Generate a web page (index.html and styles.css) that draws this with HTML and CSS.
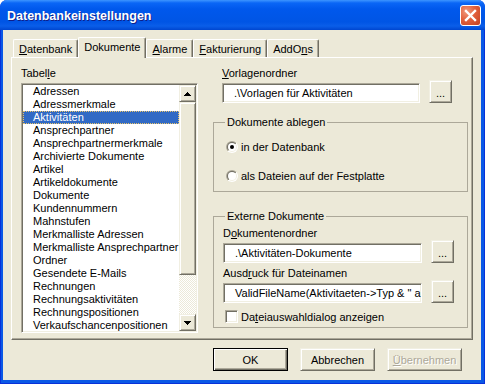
FILE: index.html
```html
<!DOCTYPE html>
<html>
<head>
    <title>Datenbankeinstellungen</title>
    <link rel="stylesheet" href="styles.css">
</head>
<body>
    <div class="fenster">
        <div class="titelleiste">
            <span class="titel">Datenbankeinstellungen</span>
            <span class="schliessen">
                <svg width="13" height="13" viewBox="0 0 13 13"><path d="M2 2L11 11M11 2L2 11" stroke="#fff" stroke-width="2.4" stroke-linecap="square"/></svg>
            </span>
        </div>
        <div class="inhalt">
            <div class="reiter">
                <span class="reiter-eintrag"><u>D</u>atenbank</span>
                <span class="reiter-eintrag aktiv">Dokumente</span>
                <span class="reiter-eintrag"><u>A</u>larme</span>
                <span class="reiter-eintrag"><u>F</u>akturierung</span>
                <span class="reiter-eintrag">AddO<u>n</u>s</span>
            </div>
            <div class="seite">
                <div class="spalte-links">
                    <div class="beschriftung">Tabel<u>l</u>e</div>
                    <div class="liste">
                        <ul class="eintraege">
                            <li>Adressen</li>
                            <li>Adressmerkmale</li>
                            <li class="gewaehlt">Aktivitäten</li>
                            <li>Ansprechpartner</li>
                            <li>Ansprechpartnermerkmale</li>
                            <li>Archivierte Dokumente</li>
                            <li>Artikel</li>
                            <li>Artikeldokumente</li>
                            <li>Dokumente</li>
                            <li>Kundennummern</li>
                            <li>Mahnstufen</li>
                            <li>Merkmalliste Adressen</li>
                            <li>Merkmalliste Ansprechpartner</li>
                            <li>Ordner</li>
                            <li>Gesendete E-Mails</li>
                            <li>Rechnungen</li>
                            <li>Rechnungsaktivitäten</li>
                            <li>Rechnungspositionen</li>
                            <li>Verkaufschancenpositionen</li>
                        </ul>
                        <div class="rollbalken">
                            <div class="rb-knopf">
                                <svg width="7" height="4" viewBox="0 0 7 4"><path d="M3 0h1v1h1v1h1v1h1v1H0V3h1V2h1V1h1z"/></svg>
                            </div>
                            <div class="rb-schieber"></div>
                            <div class="rb-bahn"></div>
                            <div class="rb-knopf">
                                <svg width="7" height="4" viewBox="0 0 7 4"><path d="M0 0h7v1H6v1H5v1H4v1H3V3H2V2H1V1H0z"/></svg>
                            </div>
                        </div>
                    </div>
                </div>
                <div class="spalte-rechts">
                    <div class="feld">
                        <div class="beschriftung"><u>V</u>orlagenordner</div>
                        <div class="feld-zeile">
                            <div class="textfeld breit">.\Vorlagen für Aktivitäten</div>
                            <button class="knopf klein">...</button>
                        </div>
                    </div>
                    <fieldset class="gruppe ablegen">
                        <legend>Dokumente ablegen</legend>
                        <label class="option erste">
                            <svg width="12" height="12" viewBox="0 0 12 12">
                                <defs>
                                    <linearGradient id="rand-aussen" x1="0" y1="0" x2="1" y2="1"><stop offset="0.5" stop-color="#aca899"/><stop offset="0.5" stop-color="#fff"/></linearGradient>
                                    <linearGradient id="rand-innen" x1="0" y1="0" x2="1" y2="1"><stop offset="0.5" stop-color="#716f64"/><stop offset="0.5" stop-color="#f1efe2"/></linearGradient>
                                </defs>
                                <circle cx="6" cy="6" r="6" fill="url(#rand-aussen)"/>
                                <circle cx="6" cy="6" r="5" fill="url(#rand-innen)"/>
                                <circle cx="6" cy="6" r="4" fill="#fff"/>
                                <circle cx="6" cy="6" r="2" fill="#000"/>
                            </svg>
                            <span>in der Datenbank</span>
                        </label>
                        <label class="option">
                            <svg width="12" height="12" viewBox="0 0 12 12">
                                <circle cx="6" cy="6" r="6" fill="url(#rand-aussen)"/>
                                <circle cx="6" cy="6" r="5" fill="url(#rand-innen)"/>
                                <circle cx="6" cy="6" r="4" fill="#fff"/>
                            </svg>
                            <span>als Dateien auf der Festplatte</span>
                        </label>
                    </fieldset>
                    <fieldset class="gruppe extern">
                        <legend>Externe Dokumente</legend>
                        <div class="beschriftung oben">D<u>o</u>kumentenordner</div>
                        <div class="feld-zeile">
                            <div class="textfeld">.\Aktivitäten-Dokumente</div>
                            <button class="knopf klein">...</button>
                        </div>
                        <div class="beschriftung oben">Ausd<u>r</u>uck für Dateinamen</div>
                        <div class="feld-zeile">
                            <div class="textfeld">ValidFileName(Aktivitaeten-&gt;Typ &amp; " a</div>
                            <button class="knopf klein">...</button>
                        </div>
                        <label class="kontrolle">
                            <span class="kaestchen"></span>
                            <span>Da<u>t</u>eiauswahldialog anzeigen</span>
                        </label>
                    </fieldset>
                </div>
            </div>
            <div class="aktionen">
                <button class="knopf standard">OK</button>
                <button class="knopf">Abbrechen</button>
                <button class="knopf inaktiv"><u>Ü</u>bernehmen</button>
            </div>
        </div>
    </div>
</body>
</html>
```
FILE: styles.css
```css
body {
    margin: 0;
    font-family: 'Liberation Sans', Arial, sans-serif;
    font-size: 11px;
    color: #000;
    background-color: #fff;
}
.fenster {
    width: 485px;
    height: 384px;
    box-sizing: border-box;
    display: flex;
    flex-direction: column;
    background-color: #0a58e6; /* Luna Rahmen */
    border: 1px solid #0831d9;
    border-top: none;
    border-radius: 7px 7px 0 0;
}
.titelleiste {
    height: 30px;
    margin: 0 -1px;
    display: flex;
    align-items: center;
    padding: 0 4px 0 7px;
    border-radius: 7px 7px 0 0;
    background: linear-gradient(180deg, #3d95ff 0, #0a66f6 3px, #0058ec 9px, #0055e5 22px, #0a5ee9 26px, #0046d0 30px);
}
.titel {
    flex: 1;
    color: #fff;
    font-weight: bold;
    font-size: 12.5px;
    text-shadow: 1px 1px 0 #0f1e88;
    padding-top: 1px;
}
.schliessen {
    width: 21px;
    height: 21px;
    box-sizing: border-box;
    display: flex;
    align-items: center;
    justify-content: center;
    border: 1px solid #fff;
    border-radius: 3px;
    background: radial-gradient(circle at 30% 30%, #f09a7e 0, #e2613d 45%, #c4401f 100%);
    margin-top: 1px;
}
.inhalt {
    flex: 1;
    margin: 0 3px 3px 2px;
    background-color: #ece9d8;
    padding: 7px 0 0 8px;
    display: flex;
    flex-direction: column;
}
.reiter {
    display: flex;
    align-items: flex-end;
    height: 20px;
    margin-left: 2px;
}
.reiter-eintrag {
    position: relative;
    height: 18px;
    box-sizing: border-box;
    padding: 0 5px;
    display: flex;
    align-items: center;
    border-top: 1px solid #fff;
    border-left: 1px solid #fff;
    border-right: 1px solid #716f64;
    box-shadow: inset -1px 0 #aca899;
    border-radius: 2px 2px 0 0;
}
.reiter-eintrag.aktiv {
    height: 21px;
    margin-bottom: -1px;
    padding-bottom: 2px;
    background-color: #ece9d8;
    z-index: 1;
}
.seite {
    width: 462px;
    height: 283px;
    box-sizing: border-box;
    border: 1px solid;
    border-color: #fff #716f64 #716f64 #fff;
    box-shadow: inset -1px -1px #aca899;
    padding: 9px 0 0 9px;
    display: flex;
}
.spalte-links {
    width: 177px;
}
.beschriftung {
    line-height: 13px;
    height: 13px;
}
.liste {
    margin-top: 3px;
    height: 250px;
    box-sizing: border-box;
    border: 1px solid;
    border-color: #aca899 #fff #fff #aca899;
    box-shadow: inset 1px 1px #716f64, inset -1px -1px #f1efe2;
    padding: 1px;
    display: flex;
    background-color: #fff;
    overflow: hidden;
}
.eintraege {
    flex: 1;
    list-style: none;
    margin: 0;
    padding: 0;
    overflow: hidden;
}
.eintraege li {
    height: 13px;
    line-height: 13px;
    padding-left: 10px;
    white-space: nowrap;
}
.eintraege li.gewaehlt {
    background-color: #316ac5;
    color: #fff;
    outline: 1px dotted #e8c36a;
    outline-offset: -1px;
}
.rollbalken {
    width: 17px;
    display: flex;
    flex-direction: column;
    background: repeating-conic-gradient(#fff 0 25%, #ece9d8 0 50%) 0 0 / 2px 2px;
}
.rb-knopf, .rb-schieber {
    box-sizing: border-box;
    background-color: #ece9d8;
    border: 1px solid;
    border-color: #f1efe2 #716f64 #716f64 #f1efe2;
    box-shadow: inset 1px 1px #fff, inset -1px -1px #aca899;
}
.rb-knopf {
    height: 17px;
    display: flex;
    align-items: center;
    justify-content: center;
}
.rb-schieber {
    height: 173px;
}
.rb-bahn {
    flex: 1;
}
.spalte-rechts {
    margin-left: 15px;
    width: 255px;
    display: flex;
    flex-direction: column;
}
.feld {
    padding-left: 9px;
}
.feld-zeile {
    display: flex;
    align-items: flex-end;
}
.textfeld {
    width: 199px;
    height: 20px;
    box-sizing: border-box;
    border: 1px solid;
    border-color: #aca899 #fff #fff #aca899;
    box-shadow: inset 1px 1px #716f64, inset -1px -1px #f1efe2;
    background-color: #fff;
    padding: 0 2px 0 11px;
    line-height: 18px;
    white-space: nowrap;
    overflow: hidden;
}
.textfeld.breit {
    width: 198px;
}
.knopf {
    font-family: inherit;
    font-size: 11px;
    color: #000;
    width: 75px;
    height: 23px;
    box-sizing: border-box;
    background-color: #ece9d8;
    border: 1px solid;
    border-color: #f1efe2 #716f64 #716f64 #f1efe2;
    box-shadow: inset 1px 1px #fff, inset -1px -1px #aca899;
    padding: 0;
}
.knopf.klein {
    width: 23px;
    margin-left: 9px;
    padding-top: 3px;
}
.knopf.standard {
    border-color: #000;
    box-shadow: inset 1px 1px #fff, inset -1px -1px #716f64, inset -2px -2px #aca899;
}
.knopf.inaktiv {
    color: #aca899;
    text-shadow: 1px 1px 0 #fff;
}
.gruppe {
    margin: 0;
    border: 1px solid #aca899;
    padding: 0 13px 0 9px;
    min-width: 0;
}
.gruppe legend {
    margin-left: 2px;
    padding: 0 2px;
    line-height: 13px;
}
.ablegen {
    margin-top: 13px;
    height: 76px;
    box-sizing: border-box;
}
.option {
    display: flex;
    align-items: center;
    gap: 3px;
    margin-left: 3px;
    height: 13px;
    margin-top: 16px;
}
.option.erste {
    margin-top: 11px;
}
.extern {
    margin-top: 18px;
    height: 118px;
    box-sizing: border-box;
}
.beschriftung.oben {
    margin-top: 4px;
}
.kontrolle {
    display: flex;
    align-items: center;
    gap: 3px;
    margin: 7px 0 0 2px;
    height: 13px;
}
.kaestchen {
    width: 13px;
    height: 13px;
    box-sizing: border-box;
    border: 1px solid;
    border-color: #aca899 #fff #fff #aca899;
    box-shadow: inset 1px 1px #716f64, inset -1px -1px #f1efe2;
    background-color: #fff;
}
.aktionen {
    margin-top: 8px;
    padding-right: 19px;
    display: flex;
    justify-content: flex-end;
    gap: 12px;
}
```
